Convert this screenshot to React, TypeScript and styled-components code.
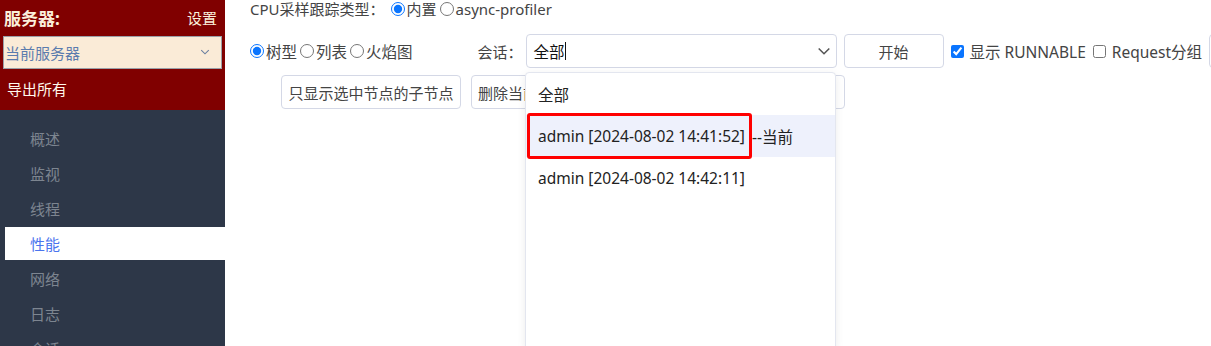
import styled, { createGlobalStyle } from 'styled-components'

const GlobalStyle = createGlobalStyle`
html, body {
  margin: 0;
  padding: 0;
  height: 100%;
  overflow: hidden;
  background: #fff;
}
body {
  font-family: "Noto Sans", "Noto Sans CJK SC", sans-serif;
  font-size: 14px;
  color: #333;
}
`

const navItems = ['概述', '监视', '线程', '性能', '网络', '日志', '会话']

const sessions = [
  { label: '全部' },
  { label: 'admin [2024-08-02 14:41:52]', suffix: '--当前', active: true },
  { label: 'admin [2024-08-02 14:42:11]' },
]

function Chevron({ size = 14, color = '#555' }: { size?: number; color?: string }) {
  return (
    <svg width={size} height={size * 0.62} viewBox="0 0 14 9">
      <polyline points="1.5,1.5 7,7 12.5,1.5" fill="none" stroke={color} strokeWidth="1.6" />
    </svg>
  )
}

export default function App() {
  return (
    <Page>
      <GlobalStyle />
      <Sidebar>
        <ServerPanel>
          <ServerHead>
            <ServerTitle>服务器:</ServerTitle>
            <Settings>设置</Settings>
          </ServerHead>
          <ServerSelect>
            <span>当前服务器</span>
            <Chevron size={10} color="#6a7fa0" />
          </ServerSelect>
          <ExportAll>导出所有</ExportAll>
        </ServerPanel>
        <Nav>
          {navItems.map(item => (
            <NavItem key={item} $active={item === '性能'}>{item}</NavItem>
          ))}
        </Nav>
      </Sidebar>

      <Main>
        <Row>
          <Text>CPU采样跟踪类型：</Text>
          <Choice><Radio type="radio" name="mode" defaultChecked />内置</Choice>
          <Choice><Radio type="radio" name="mode" />async-profiler</Choice>
        </Row>

        <ToolRow>
          <Choice><Radio type="radio" name="view" defaultChecked />树型</Choice>
          <Choice><Radio type="radio" name="view" />列表</Choice>
          <Choice><Radio type="radio" name="view" />火焰图</Choice>
          <SessionLabel>会话：</SessionLabel>
          <SessionSelect>
            <SelectValue>全部<Caret /></SelectValue>
            <Chevron />
          </SessionSelect>
          <Controls>
            <Button $width={100}>开始</Button>
            <Choice $gap={6}><Check type="checkbox" defaultChecked />显示 RUNNABLE</Choice>
            <Choice $gap={6}><Check type="checkbox" />Request分组</Choice>
            <Button $width={80}>导出</Button>
          </Controls>
        </ToolRow>

        <ActionRow>
          <Button $width={180}>只显示选中节点的子节点</Button>
          <Button $width={374} $align="left">删除当前选中节点</Button>
        </ActionRow>

        <Dropdown>
          {sessions.map(s => (
            <Option key={s.label + (s.suffix || '')} $active={!!s.active}>
              {s.active ? <Marked>{s.label}</Marked> : s.label}
              {s.suffix}
            </Option>
          ))}
        </Dropdown>
      </Main>
    </Page>
  )
}

const Page = styled.div`
display: flex;
width: 100vw;
height: 100vh;
overflow: hidden;
`

const Sidebar = styled.aside`
width: 225px;
flex: none;
display: flex;
flex-direction: column;
background: #2d3748;
overflow: hidden;
`

const ServerPanel = styled.div`
height: 110px;
flex: none;
background: #800000;
display: flex;
flex-direction: column;
padding: 6px 3px 0 3px;
box-sizing: border-box;
color: #fbf0dc;
`

const ServerHead = styled.div`
display: flex;
justify-content: space-between;
align-items: center;
height: 22px;
padding: 0 5px 0 1px;
`

const ServerTitle = styled.span`
font-size: 17px;
font-weight: 700;
`

const Settings = styled.span`
font-size: 15px;
`

const ServerSelect = styled.div`
margin-top: 8px;
height: 33px;
box-sizing: border-box;
border: 1px solid #9aa0a8;
background: #faebd7;
color: #5a7cae;
font-size: 15px;
display: flex;
align-items: center;
justify-content: space-between;
padding: 0 11px 0 1px;
`

const ExportAll = styled.div`
margin-top: 9px;
padding-left: 4px;
font-size: 15px;
color: #fff8ec;
`

const Nav = styled.nav`
flex: 1;
min-height: 0;
padding: 12px 0 0 5px;
display: flex;
flex-direction: column;
gap: 2px;
`

const NavItem = styled.div<{ $active: boolean }>`
height: 33px;
flex: none;
display: flex;
align-items: center;
padding-left: 25px;
font-size: 15px;
color: ${p => (p.$active ? '#4a74ee' : '#7d8590')};
background: ${p => (p.$active ? '#fff' : 'transparent')};
`

const Main = styled.main`
flex: 1;
position: relative;
padding-left: 25px;
min-width: 0;
white-space: nowrap;
color: #444;
font-size: 15.5px;
`

const Row = styled.div`
display: flex;
align-items: center;
height: 18px;
line-height: 18px;
gap: 3px;
font-size: 15px;
`

const ToolRow = styled.div`
display: flex;
align-items: center;
height: 34px;
margin-top: 16px;
gap: 3px;
`

const Controls = styled.div`
display: flex;
align-items: center;
gap: 7px;
margin-left: 4px;
`

const ActionRow = styled.div`
display: flex;
align-items: center;
margin-top: 7px;
padding-left: 31px;
gap: 10px;
`

const Text = styled.span`
margin-right: 3px;
`

const Choice = styled.label<{ $gap?: number }>`
display: inline-flex;
align-items: center;
gap: ${p => p.$gap ?? 2}px;
`

const Radio = styled.input`
width: 14px;
height: 14px;
margin: 0;
accent-color: #0a75ff;
`

const Check = styled.input`
width: 13px;
height: 13px;
margin: 0;
accent-color: #0a75ff;
`

const SessionLabel = styled.span`
margin-left: 62px;
font-size: 15px;
`

const SessionSelect = styled.div`
width: 311px;
height: 34px;
flex: none;
box-sizing: border-box;
border: 1px solid #d4d8e6;
border-radius: 4px;
display: flex;
align-items: center;
justify-content: space-between;
padding: 0 5px 0 7px;
color: #111;
`

const SelectValue = styled.span`
display: inline-flex;
align-items: center;
`

const Caret = styled.span`
width: 1px;
height: 18px;
background: #111;
`

const Button = styled.div<{ $width: number; $align?: string }>`
width: ${p => p.$width}px;
height: 34px;
flex: none;
box-sizing: border-box;
border: 1px solid #d4d8e6;
border-radius: 4px;
background: #fff;
display: flex;
align-items: center;
justify-content: ${p => (p.$align === 'left' ? 'flex-start' : 'center')};
padding: 0 6px;
color: #444;
font-size: 15px;
`

const Dropdown = styled.div`
position: absolute;
left: 300px;
top: 72px;
width: 311px;
bottom: -4px;
box-sizing: border-box;
background: #fff;
border: 1px solid #e3e6ef;
border-radius: 4px;
box-shadow: 0 2px 8px rgba(0, 0, 0, 0.08);
color: #222;
`

const Option = styled.div<{ $active: boolean }>`
height: 42px;
display: flex;
align-items: center;
padding-left: 12px;
background: ${p => (p.$active ? '#eef1fc' : 'transparent')};
`

const Marked = styled.span`
display: flex;
align-items: center;
height: 46px;
margin-left: -11px;
padding: 0 4px 0 8px;
box-sizing: border-box;
border: 3px solid #ff0000;
border-radius: 3px;
`
